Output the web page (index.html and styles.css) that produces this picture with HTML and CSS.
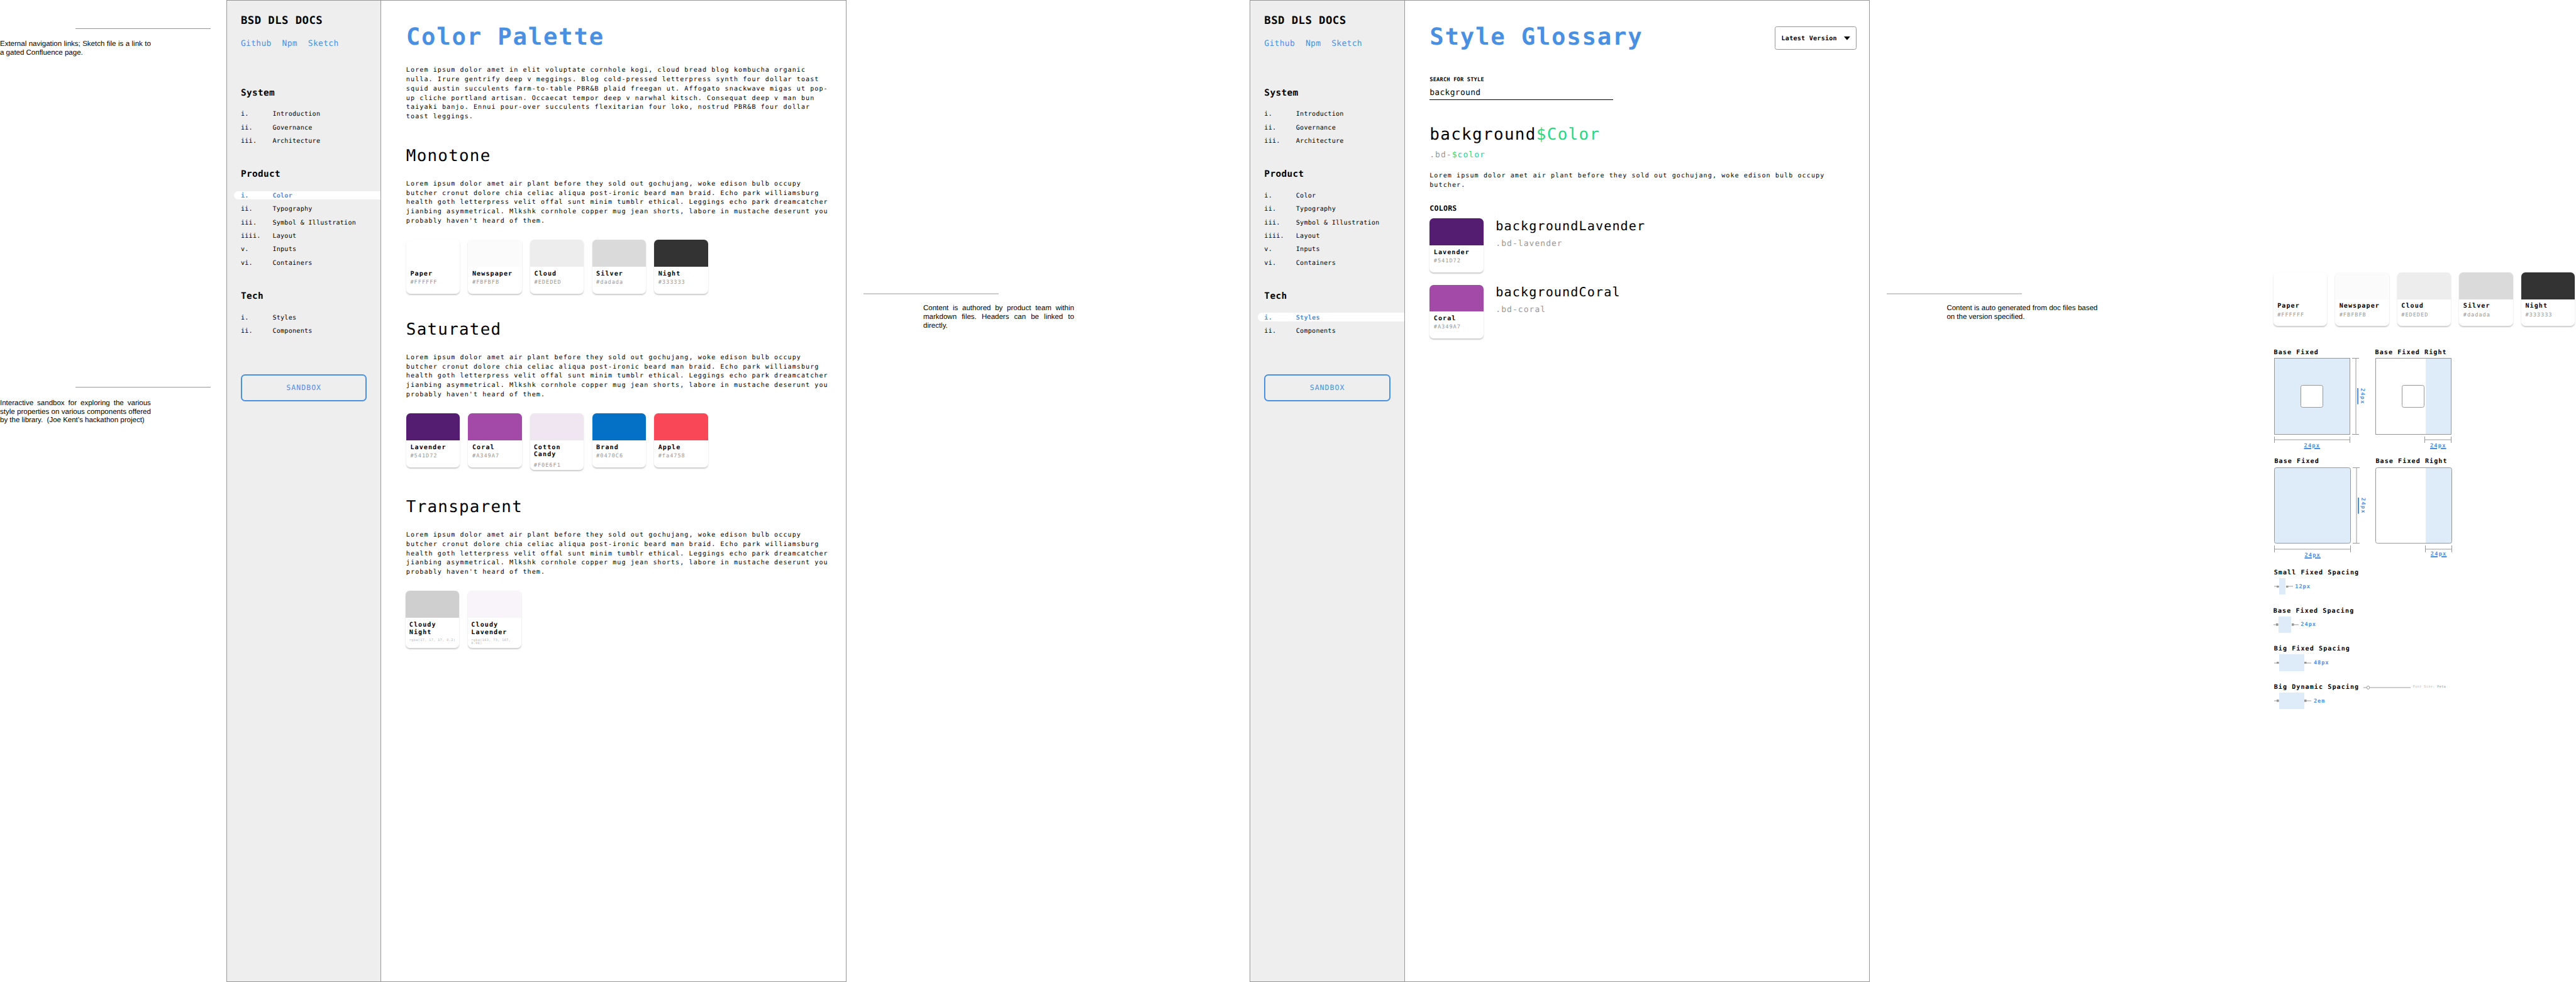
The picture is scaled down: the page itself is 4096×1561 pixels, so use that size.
FILE: index.html
```html
<!DOCTYPE html>
<html lang="en">
<head>
<meta charset="utf-8">
<title>BSD DLS Docs</title>
<link rel="stylesheet" href="styles.css">
</head>
<body>
<div class="board">

  <aside class="notes notes-left">
    <div class="note note-links">
      <hr class="note-rule">
      <p class="note-text">External navigation links; Sketch file is a link to a gated Confluence page.</p>
    </div>
    <div class="note note-sandbox">
      <hr class="note-rule">
      <p class="note-text">Interactive sandbox for exploring the various style properties on various components offered by the library. &nbsp;(Joe Kent’s hackathon project)</p>
    </div>
  </aside>

  <section class="frame">
    <nav class="sidebar">
      <div class="brand">BSD DLS DOCS</div>
      <div class="links"><a>Github</a><a>Npm</a><a>Sketch</a></div>
      <h3 class="group group-first">System</h3>
      <ul class="menu">
        <li><span>i.</span>Introduction</li>
        <li><span>ii.</span>Governance</li>
        <li><span>iii.</span>Architecture</li>
      </ul>
      <h3 class="group">Product</h3>
      <ul class="menu">
        <li class="current"><span>i.</span>Color</li>
        <li><span>ii.</span>Typography</li>
        <li><span>iii.</span>Symbol &amp; Illustration</li>
        <li><span>iiii.</span>Layout</li>
        <li><span>v.</span>Inputs</li>
        <li><span>vi.</span>Containers</li>
      </ul>
      <h3 class="group">Tech</h3>
      <ul class="menu">
        <li><span>i.</span>Styles</li>
        <li><span>ii.</span>Components</li>
      </ul>
      <a class="sandbox">SANDBOX</a>
    </nav>
    <main class="content">
      <h1>Color Palette</h1>
      <p class="copy">Lorem ipsum dolor amet in elit voluptate cornhole kogi, cloud bread blog kombucha organic nulla. Irure gentrify deep v meggings. Blog cold-pressed letterpress synth four dollar toast squid austin succulents farm-to-table PBR&amp;B plaid freegan ut. Affogato snackwave migas ut pop-up cliche portland artisan. Occaecat tempor deep v narwhal kitsch. Consequat deep v man bun taiyaki banjo. Ennui pour-over succulents flexitarian four loko, nostrud PBR&amp;B four dollar toast leggings.</p>

      <h2>Monotone</h2>
      <p class="copy">Lorem ipsum dolor amet air plant before they sold out gochujang, woke edison bulb occupy butcher cronut dolore chia celiac aliqua post-ironic beard man braid. Echo park williamsburg health goth letterpress velit offal sunt minim tumblr ethical. Leggings echo park dreamcatcher jianbing asymmetrical. Mlkshk cornhole copper mug jean shorts, labore in mustache deserunt you probably haven't heard of them.</p>
      <div class="cards">
        <div class="card"><div class="swatch paper"></div><b>Paper</b><i>#FFFFFF</i></div>
        <div class="card"><div class="swatch newspaper"></div><b>Newspaper</b><i>#FBFBFB</i></div>
        <div class="card"><div class="swatch cloud"></div><b>Cloud</b><i>#EDEDED</i></div>
        <div class="card"><div class="swatch silver"></div><b>Silver</b><i>#dadada</i></div>
        <div class="card"><div class="swatch night"></div><b>Night</b><i>#333333</i></div>
      </div>

      <h2 class="after-cards">Saturated</h2>
      <p class="copy">Lorem ipsum dolor amet air plant before they sold out gochujang, woke edison bulb occupy butcher cronut dolore chia celiac aliqua post-ironic beard man braid. Echo park williamsburg health goth letterpress velit offal sunt minim tumblr ethical. Leggings echo park dreamcatcher jianbing asymmetrical. Mlkshk cornhole copper mug jean shorts, labore in mustache deserunt you probably haven't heard of them.</p>
      <div class="cards">
        <div class="card"><div class="swatch lavender"></div><b>Lavender</b><i>#541D72</i></div>
        <div class="card"><div class="swatch coral"></div><b>Coral</b><i>#A349A7</i></div>
        <div class="card card-tall"><div class="swatch cotton"></div><b>Cotton Candy</b><i>#F0E6F1</i></div>
        <div class="card"><div class="swatch brand-blue"></div><b>Brand</b><i>#0470C6</i></div>
        <div class="card"><div class="swatch apple"></div><b>Apple</b><i>#fa4758</i></div>
      </div>

      <h2 class="after-cards after-tall">Transparent</h2>
      <p class="copy">Lorem ipsum dolor amet air plant before they sold out gochujang, woke edison bulb occupy butcher cronut dolore chia celiac aliqua post-ironic beard man braid. Echo park williamsburg health goth letterpress velit offal sunt minim tumblr ethical. Leggings echo park dreamcatcher jianbing asymmetrical. Mlkshk cornhole copper mug jean shorts, labore in mustache deserunt you probably haven't heard of them.</p>
      <div class="cards cards-shifted">
        <div class="card card-tall"><div class="swatch cloudy-night"></div><b>Cloudy Night</b><i class="tiny">rgba(17, 17, 17, 0.2)</i></div>
        <div class="card card-tall"><div class="swatch cloudy-lavender"></div><b>Cloudy Lavender</b><i class="tiny">rgba(163, 73, 167, 0.06)</i></div>
      </div>
    </main>
  </section>

  <aside class="notes">
    <div class="note note-content">
      <hr class="note-rule">
      <p class="note-text">Content is authored by product team within markdown files. Headers can be linked to directly.</p>
    </div>
  </aside>

  <section class="frame">
    <nav class="sidebar">
      <div class="brand">BSD DLS DOCS</div>
      <div class="links"><a>Github</a><a>Npm</a><a>Sketch</a></div>
      <h3 class="group group-first">System</h3>
      <ul class="menu">
        <li><span>i.</span>Introduction</li>
        <li><span>ii.</span>Governance</li>
        <li><span>iii.</span>Architecture</li>
      </ul>
      <h3 class="group">Product</h3>
      <ul class="menu">
        <li><span>i.</span>Color</li>
        <li><span>ii.</span>Typography</li>
        <li><span>iii.</span>Symbol &amp; Illustration</li>
        <li><span>iiii.</span>Layout</li>
        <li><span>v.</span>Inputs</li>
        <li><span>vi.</span>Containers</li>
      </ul>
      <h3 class="group">Tech</h3>
      <ul class="menu">
        <li class="current"><span>i.</span>Styles</li>
        <li><span>ii.</span>Components</li>
      </ul>
      <a class="sandbox">SANDBOX</a>
    </nav>
    <main class="content">
      <header class="heading">
        <h1>Style Glossary</h1>
        <div class="version">Latest Version
          <svg class="caret" viewBox="0 0 12 7"><path d="M0 0h12L6 7z"/></svg>
        </div>
      </header>
      <div class="search">
        <label>SEARCH FOR STYLE</label>
        <div class="field">background</div>
      </div>
      <div class="token">background<em>$Color</em></div>
      <div class="selector">.bd-<em>$color</em></div>
      <p class="copy copy-token">Lorem ipsum dolor amet air plant before they sold out gochujang, woke edison bulb occupy butcher.</p>
      <h4>COLORS</h4>
      <div class="entries">
        <div class="entry">
          <div class="card"><div class="swatch lavender"></div><b>Lavender</b><i>#541D72</i></div>
          <div>
            <div class="entry-name">backgroundLavender</div>
            <div class="selector">.bd-lavender</div>
          </div>
        </div>
        <div class="entry">
          <div class="card"><div class="swatch coral"></div><b>Coral</b><i>#A349A7</i></div>
          <div>
            <div class="entry-name">backgroundCoral</div>
            <div class="selector">.bd-coral</div>
          </div>
        </div>
      </div>
    </main>
  </section>

  <aside class="notes">
    <div class="note note-content">
      <hr class="note-rule">
      <p class="note-text">Content is auto generated from doc files based on the version specified.</p>
    </div>
  </aside>

  <section class="specimens">
    <div class="cards">
      <div class="card"><div class="swatch paper"></div><b>Paper</b><i>#FFFFFF</i></div>
      <div class="card"><div class="swatch newspaper"></div><b>Newspaper</b><i>#FBFBFB</i></div>
      <div class="card"><div class="swatch cloud"></div><b>Cloud</b><i>#EDEDED</i></div>
      <div class="card"><div class="swatch silver"></div><b>Silver</b><i>#dadada</i></div>
      <div class="card"><div class="swatch night"></div><b>Night</b><i>#333333</i></div>
    </div>

    <div class="figures figures-inset">
      <div class="figure">
        <div class="caption">Base Fixed</div>
        <div class="plate"><div class="box"><div class="core"></div></div><div class="ruler-v"></div><span class="size size-v">24px</span></div>
        <div class="ruler-h"></div>
        <div class="size">24px</div>
      </div>
      <div class="figure">
        <div class="caption">Base Fixed Right</div>
        <div class="plate"><div class="box box-right"><div class="core"></div></div></div>
        <div class="ruler-h ruler-right"></div>
        <div class="size size-right">24px</div>
      </div>
    </div>

    <div class="figures figures-bare">
      <div class="figure">
        <div class="caption">Base Fixed</div>
        <div class="plate"><div class="box rounded"></div><div class="ruler-v"></div><span class="size size-v">24px</span></div>
        <div class="ruler-h"></div>
        <div class="size">24px</div>
      </div>
      <div class="figure">
        <div class="caption">Base Fixed Right</div>
        <div class="plate"><div class="box box-right rounded"></div></div>
        <div class="ruler-h ruler-right"></div>
        <div class="size size-right size-raised">24px</div>
      </div>
    </div>

    <div class="spacing">
      <div class="caption">Small Fixed Spacing</div>
      <div class="gauge"><span class="arm"></span><span class="fill fill-small"></span><span class="arm arm-end"></span><span class="amount">12px</span></div>
    </div>
    <div class="spacing spacing-base">
      <div class="caption">Base Fixed Spacing</div>
      <div class="gauge"><span class="arm"></span><span class="fill fill-base"></span><span class="arm arm-end"></span><span class="amount">24px</span></div>
    </div>
    <div class="spacing">
      <div class="caption">Big Fixed Spacing</div>
      <div class="gauge"><span class="arm"></span><span class="fill fill-big"></span><span class="arm arm-end"></span><span class="amount">48px</span></div>
    </div>
    <div class="spacing">
      <div class="caption caption-slider">Big Dynamic Spacing
        <span class="slider"><span class="knob"></span></span>
        <span class="slider-label">Font Size: <b>Peta</b></span>
      </div>
      <div class="gauge"><span class="arm"></span><span class="fill fill-big"></span><span class="arm arm-end"></span><span class="amount">2em</span></div>
    </div>
  </section>

</div>
</body>
</html>
```

FILE: styles.css
```css
/* 1rem is ten design units; the design is 498.6rem wide. */
html {
  font-size: 8.215px;
  text-rendering: geometricPrecision;
}

*, *::before, *::after { box-sizing: border-box; }

body, h1, h2, h3, h4, p, ul, hr { margin: 0; padding: 0; }

body {
  background: #fff;
  color: #000;
  font-family: "DejaVu Sans Mono", "Liberation Mono", monospace;
  overflow: hidden;
}

i, em { font-style: normal; }

.board {
  display: flex;
  width: 498.6rem;
  height: 1561px;
}

/* Annotations */
.notes {
  flex: 0 0 78.1rem;
  font: 1.4rem/1.7rem "Liberation Sans", Arial, sans-serif;
}
.notes-left { flex-basis: 43.8rem; }
.note-rule {
  width: 26.2rem;
  height: 2px;
  border: 0;
  background: #ccc;
}
.note-text {
  width: 29.2rem;
  text-align: justify;
}
.notes-left .note-rule {
  height: 1px;
  margin-left: 14.6rem;
  background: #979797;
}
.notes-left .note-text { margin-top: 2.22rem; }
.note-links { padding-top: 5.5rem; height: 74.9rem; }
.note-content { padding-top: 56.7rem; }
.note-content .note-rule { margin-left: 3.3rem; }
.note-content .note-text { margin: 1.98rem 0 0 14.9rem; }

/* Page frames */
.frame {
  flex: 0 0 120rem;
  display: flex;
  border: 1px solid #979797;
}

.sidebar {
  flex: 0 0 29.9rem;
  padding: 2.55rem 0 0 2.7rem;
  background: #eee;
  border-right: 1px solid #979797;
}
.brand {
  margin-bottom: -.15rem;
  font-weight: bold;
  font-size: 2.1rem;
  line-height: 2.8rem;
  letter-spacing: .056rem;
}
.links {
  display: flex;
  gap: 2.05rem;
  margin: 2.12rem 0 -.17rem;
  color: #4a90e2;
  font-size: 1.575rem;
  line-height: 2.2rem;
  letter-spacing: .042rem;
}
.group {
  margin: 4.62rem 0 -.17rem;
  font-size: 1.75rem;
  line-height: 2.4rem;
  letter-spacing: .046rem;
}
.group-first { margin-top: 7.42rem; }
.menu {
  display: grid;
  gap: .9rem;
  margin: 2.04rem 0 0 -1.3rem;
  list-style: none;
  font-size: 1.225rem;
  line-height: 1.4rem;
  letter-spacing: .0325rem;
}
.menu li {
  display: flex;
  padding: .3rem 0 0 1.3rem;
  border-radius: .8rem 0 0 .8rem;
}
.menu span { flex: 0 0 6.14rem; }
.menu .current {
  background: #fff;
  color: #4a90e2;
  font-weight: bold;
}
.sandbox {
  display: block;
  width: 24.4rem;
  margin-top: 7.55rem;
  border: 2px solid #4a90e2;
  border-radius: .8rem;
  color: #4a90e2;
  font-size: 1.4rem;
  line-height: 4.75rem;
  letter-spacing: .127rem;
  text-align: center;
}

.content {
  flex: 1;
  padding: 4rem 2.4rem 0 4.8rem;
}
h1 {
  padding-top: .07rem;
  margin-bottom: -.07rem;
  color: #4a90e2;
  font-size: 4.55rem;
  line-height: 6rem;
  letter-spacing: .212rem;
}
.copy {
  width: 82.6rem;
  margin: 2.7rem 0 -.22rem;
  font-size: 1.225rem;
  line-height: 1.8rem;
  letter-spacing: .1325rem;
}
h2, .token {
  margin: 4.68rem 0 -.18rem;
  font-weight: normal;
  font-size: 3.15rem;
  line-height: 4.2rem;
  letter-spacing: .154rem;
}
.token { letter-spacing: .168rem; }
h2.after-cards { margin-top: 4.88rem; }
h2.after-tall { margin-top: 5.05rem; }

/* Colour cards */
.cards {
  display: flex;
  align-items: flex-start;
  gap: 1.6rem;
  margin-top: 2.82rem;
}
.cards-shifted { margin-left: -.1rem; }
.card {
  flex: 0 0 10.4rem;
  height: 10.4rem;
  overflow: hidden;
  border-radius: .8rem;
  background: #fff;
  box-shadow: 0 .15rem .25rem rgba(0, 0, 0, .2);
}
.swatch { height: 5.2rem; }
.card b {
  display: block;
  padding: .7rem 0 0 .8rem;
  font-size: 1.225rem;
  line-height: 1.44rem;
  letter-spacing: .1325rem;
}
.card i {
  display: block;
  margin-top: .29rem;
  padding-left: .8rem;
  color: #999;
  font-size: 1.05rem;
  line-height: 1.4rem;
  letter-spacing: .118rem;
}
.card-tall { height: 11rem; }
.card-tall b { padding-left: .7rem; }
.card-tall i { margin-top: .71rem; padding-left: .7rem; }
.card .tiny {
  margin-top: .6rem;
  color: #b0b0b0;
  font-size: .61rem;
  line-height: .6rem;
  letter-spacing: .059rem;
}
.paper { background: #fff; }
.newspaper { background: #fbfbfb; }
.cloud { background: #ededed; }
.silver { background: #dadada; }
.night { background: #333; }
.lavender { background: #541d72; }
.coral { background: #a349a7; }
.cotton { background: #f0e6f1; }
.brand-blue { background: #0470c6; }
.apple { background: #fa4758; }
.cloudy-night { background: #cfcfcf; }
.cloudy-lavender { background: #f9f4fa; }

/* Glossary */
.heading {
  display: flex;
  justify-content: space-between;
  align-items: center;
}
.version {
  display: flex;
  align-items: center;
  justify-content: space-between;
  width: 15.8rem;
  height: 4.6rem;
  margin-top: .5rem;
  padding: .2rem 1.1rem 0;
  border: 1px solid #979797;
  border-radius: .4rem;
  font-weight: bold;
  font-size: 1.225rem;
  letter-spacing: .0325rem;
}
.caret { width: 1.2rem; height: .7rem; }
.search {
  width: 35.5rem;
  margin-top: 4.5rem;
  border-bottom: 1px solid #000;
}
.search label {
  display: block;
  padding-top: .2rem;
  margin-bottom: -.2rem;
  font-weight: bold;
  font-size: 1.05rem;
  line-height: 1.4rem;
  letter-spacing: .028rem;
}
.field {
  margin-top: .66rem;
  padding-top: .2rem;
  font-size: 1.575rem;
  line-height: 2.3rem;
  letter-spacing: .042rem;
}
.token em, .selector em { color: #24d884; }
.selector {
  margin: .91rem 0 -.17rem;
  color: #999;
  font-size: 1.575rem;
  line-height: 2.2rem;
  letter-spacing: .132rem;
}
.copy-token { margin-top: 2.32rem; }
h4 {
  margin: 2.78rem 0 -.18rem;
  font-size: 1.4rem;
  line-height: 1.8rem;
  letter-spacing: .037rem;
}
.entries {
  display: grid;
  gap: 2.4rem;
  margin-top: 1.25rem;
}
.entry { display: flex; gap: 2.4rem; }
.entry-name {
  margin: -.16rem 0 -.15rem;
  font-size: 2.45rem;
  line-height: 3.2rem;
  letter-spacing: .135rem;
}

/* Spacing specimens */
.specimens {
  flex: 0 0 58.6rem;
  padding-top: 52.7rem;
}
.specimens .cards { margin: 0 0 4.1rem; }
.figures { display: flex; }
.figures-inset { height: 21.1rem; margin-left: .12rem; }
.figures-bare { height: 21.52rem; margin-left: .23rem; }
.figure { flex: 0 0 19.6rem; }
.caption {
  padding-top: .22rem;
  margin-bottom: -.22rem;
  font-weight: bold;
  font-size: 1.225rem;
  line-height: 1.8rem;
  letter-spacing: .1325rem;
  white-space: nowrap;
}
.plate {
  display: flex;
  align-items: center;
  height: 14.8rem;
  margin-top: .3rem;
}
.box {
  display: grid;
  place-items: center;
  width: 14.8rem;
  height: 14.8rem;
  border: 1px solid #979797;
  background: #deebf9;
}
.box-right { background: linear-gradient(to right, #fff 9.6rem, #deebf9 9.6rem); }
.rounded { border-radius: .4rem; }
.core {
  width: 4.4rem;
  height: 4.4rem;
  border: 1px solid #979797;
  border-radius: .4rem;
  background: #fff;
}
.ruler-v {
  width: 1.3rem;
  height: 14.8rem;
  margin-left: .4rem;
  border: solid #979797;
  border-width: 1px 0;
  background: linear-gradient(#ccc, #ccc) center / 2px 100% no-repeat;
}
.ruler-h {
  width: 14.8rem;
  height: 1.26rem;
  margin-top: .4rem;
  border: solid #979797;
  border-width: 0 1px;
  background: linear-gradient(#ccc, #ccc) center / 100% 2px no-repeat;
}
.ruler-right {
  width: 5.2rem;
  margin-left: 9.6rem;
}
.size {
  width: 14.8rem;
  margin-top: .1rem;
  color: #4a90e2;
  font-weight: bold;
  font-size: 1.05rem;
  line-height: 1.2rem;
  letter-spacing: .148rem;
  text-align: center;
  text-decoration: underline;
  text-decoration-thickness: 2px;
  text-underline-offset: 1px;
}
.size-right { width: 5.2rem; margin-left: 9.6rem; }
.size-raised { margin-top: -.1rem; }
.size-v {
  width: auto;
  margin: 0 0 0 -.1rem;
  writing-mode: vertical-rl;
}

.spacing { height: 7.38rem; padding-left: .13rem; }
.spacing-base { padding-left: .03rem; }
.gauge {
  display: flex;
  align-items: center;
  height: 3.2rem;
  margin: .28rem 0 0 .07rem;
}
.arm {
  width: .9rem;
  height: .43rem;
  background:
    linear-gradient(#979797, #979797) right / .43rem 100% no-repeat,
    linear-gradient(#ccc, #ccc) center / 100% 2px no-repeat;
}
.arm-end {
  width: 1.35rem;
  background:
    linear-gradient(#979797, #979797) left / .43rem 100% no-repeat,
    linear-gradient(#ccc, #ccc) center / 100% 2px no-repeat;
}
.fill {
  height: 3.2rem;
  margin: 0 .07rem;
  background: #deebf9;
}
.fill-small { width: 1.2rem; }
.fill-base { width: 2.4rem; }
.fill-big { width: 4.8rem; }
.amount {
  padding-top: .3rem;
  margin-left: .45rem;
  color: #4a90e2;
  font-weight: bold;
  font-size: 1.05rem;
  line-height: 1.4rem;
  letter-spacing: .118rem;
}
.caption-slider { display: flex; align-items: center; }
.slider {
  position: relative;
  width: 9.17rem;
  height: 2px;
  margin-left: .77rem;
  background: #ccc;
}
.knob {
  position: absolute;
  left: .62rem;
  top: calc(1px - .35rem);
  width: .7rem;
  height: .7rem;
  border: 1px solid #979797;
  border-radius: 50%;
  background: #fff;
}
.slider-label {
  margin: 0 0 .2rem .47rem;
  color: #b0b0b0;
  font-weight: normal;
  font-size: .61rem;
  line-height: .6rem;
  letter-spacing: .059rem;
}
```
